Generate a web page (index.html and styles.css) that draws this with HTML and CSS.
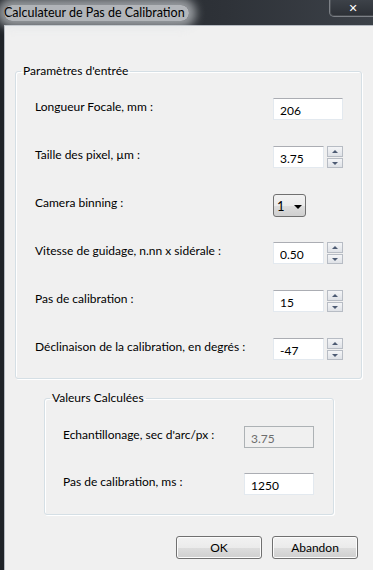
FILE: index.html
```html
<!DOCTYPE html>
<html lang="fr">
<head>
    <meta charset="UTF-8">
    <title>Calculateur de Pas de Calibration</title>
    <link rel="stylesheet" href="styles.css">
</head>
<body>
    <div class="window">
        <!-- Barre de titre -->
        <div class="titlebar">
            <span class="title">Calculateur de Pas de Calibration</span>
            <button class="btn-close">&#x2715;</button>
        </div>

        <div class="client">
            <fieldset class="group group-entree">
                <legend>Paramètres d'entrée</legend>
                <div class="rows">
                    <label>Longueur Focale, mm :</label>
                    <div class="ctrl"><input type="text" class="field" value="206"></div>

                    <label>Taille des pixel, µm :</label>
                    <div class="ctrl spin">
                        <input type="text" class="field" value="3.75">
                        <div class="spinner"><span class="up"></span><span class="down"></span></div>
                    </div>

                    <label>Camera binning :</label>
                    <div class="ctrl"><div class="combo">1<span class="caret"></span></div></div>

                    <label>Vitesse de guidage, n.nn x sidérale :</label>
                    <div class="ctrl spin">
                        <input type="text" class="field" value="0.50">
                        <div class="spinner"><span class="up"></span><span class="down"></span></div>
                    </div>

                    <label>Pas de calibration :</label>
                    <div class="ctrl spin">
                        <input type="text" class="field" value="15">
                        <div class="spinner"><span class="up"></span><span class="down"></span></div>
                    </div>

                    <label>Déclinaison de la calibration, en degrés :</label>
                    <div class="ctrl spin">
                        <input type="text" class="field" value="-47">
                        <div class="spinner"><span class="up"></span><span class="down"></span></div>
                    </div>
                </div>
            </fieldset>

            <fieldset class="group group-calc">
                <legend>Valeurs Calculées</legend>
                <div class="rows">
                    <label>Echantillonage, sec d'arc/px :</label>
                    <div class="ctrl"><input type="text" class="field" value="3.75" disabled></div>

                    <label>Pas de calibration, ms :</label>
                    <div class="ctrl"><input type="text" class="field" value="1250"></div>
                </div>
            </fieldset>

            <div class="actions">
                <button class="btn">OK</button>
                <button class="btn">Abandon</button>
            </div>
        </div>
    </div>
</body>
</html>
```

FILE: styles.css
```css
/* Fenêtre style Windows 7 */
body {
    margin: 0;
    width: 373px;
    height: 570px;
    overflow: hidden;
    font-family: Lato, "Open Sans", sans-serif;
    font-size: 12px;
    color: #000;
}

.window {
    height: 570px;
    background: linear-gradient(to right, #1f2328, #2e3238 60%, #3c4148);
    padding-left: 4px;
    display: flex;
    flex-direction: column;
}

.titlebar {
    height: 25px;
    position: relative;
    display: flex;
    align-items: center;
}

.title {
    padding: 0 4px 0 0;
    font-size: 12.5px;
    line-height: 16px;
    background: rgba(225, 228, 232, 0.75);
    border-radius: 10px;
    box-shadow: 0 0 10px 7px rgba(225, 228, 232, 0.6);
}

.btn-close {
    position: absolute;
    top: -2px;
    right: -4px;
    width: 48px;
    height: 19px;
    border: 1px solid #7d8187;
    border-top: none;
    border-radius: 0 0 0 5px;
    background: linear-gradient(#3f444b, #2c3036);
    box-shadow: inset 0 0 0 1px rgba(255, 255, 255, 0.12);
    color: #fff;
    font-family: "DejaVu Sans", sans-serif;
    font-weight: bold;
    font-size: 11px;
    padding: 2px 0 0;
}

.client {
    flex: 1;
    background: #f0f0f0;
    border-left: 1px solid #b5bac1;
    border-top: 1px solid #b5bac1;
}

/* Groupes */
.group {
    border: 1px solid #d5dfe5;
    border-radius: 3px;
    box-shadow: inset 1px 1px 0 #fff, 1px 1px 0 #fff;
    padding: 0;
    margin: 0;
}

.group legend {
    margin-left: 5px;
    padding: 0 2px;
    line-height: 16px;
}

.group-entree {
    margin: 37px 11px 0 10px;
}

.group-calc {
    margin: 11px 39px 0 39px;
}

.rows {
    display: grid;
    grid-template-columns: 1fr 70px;
    grid-auto-rows: 22px;
    align-items: start;
}

.group-entree .rows {
    row-gap: 26px;
    padding: 19px 18px 18px 19px;
}

.group-calc .rows {
    row-gap: 25px;
    padding: 20px 19px 19px 18px;
}

.rows label {
    line-height: 16px;
    padding-top: 1px;
    white-space: nowrap;
}

.ctrl {
    display: flex;
    gap: 3px;
    height: 22px;
}

.field {
    width: 100%;
    height: 22px;
    box-sizing: border-box;
    border: 1px solid #e3e9ef;
    border-top-color: #abadb3;
    background: #fff;
    font: inherit;
    color: #000;
    padding: 2px 0 0 6px;
    margin: 0;
    outline: none;
}

.spin .field {
    width: 51px;
}

.field:disabled {
    background: #f0f0f0;
    border-color: #adb2b5;
    color: #6d6d6d;
}

/* Boutons haut / bas */
.spinner {
    width: 16px;
    display: flex;
    flex-direction: column;
    gap: 1px;
}

.spinner span {
    flex: 1;
    position: relative;
    border: 1px solid #b7bcc4;
    background: linear-gradient(#f4f5f7, #dfe2e7);
}

.spinner span::after {
    content: "";
    position: absolute;
    left: 4px;
    top: 3px;
    border-left: 3px solid transparent;
    border-right: 3px solid transparent;
}

.spinner .up::after {
    border-bottom: 3px solid #4d5b73;
}

.spinner .down::after {
    border-top: 3px solid #4d5b73;
}

/* Liste déroulante */
.combo {
    width: 33px;
    height: 23px;
    box-sizing: border-box;
    border: 1px solid #707070;
    border-radius: 3px;
    background: linear-gradient(#f2f2f2, #ebebeb 50%, #dddddd 51%, #cfcfcf);
    padding: 2px 0 0 3px;
    font-size: 13px;
    line-height: 17px;
    display: flex;
    align-items: center;
    gap: 9px;
}

.caret {
    border-left: 4px solid transparent;
    border-right: 4px solid transparent;
    border-top: 4px solid #000;
}

/* Boutons OK / Abandon */
.actions {
    display: flex;
    justify-content: flex-end;
    gap: 10px;
    margin-top: 21px;
    padding-right: 15px;
}

.btn {
    width: 86px;
    height: 23px;
    border: 1px solid #707070;
    border-radius: 3px;
    background: linear-gradient(#f2f2f2, #ebebeb 50%, #dddddd 51%, #cfcfcf);
    box-shadow: inset 0 0 0 1px #fcfcfc;
    font: inherit;
    color: #000;
    padding: 0;
}
```
